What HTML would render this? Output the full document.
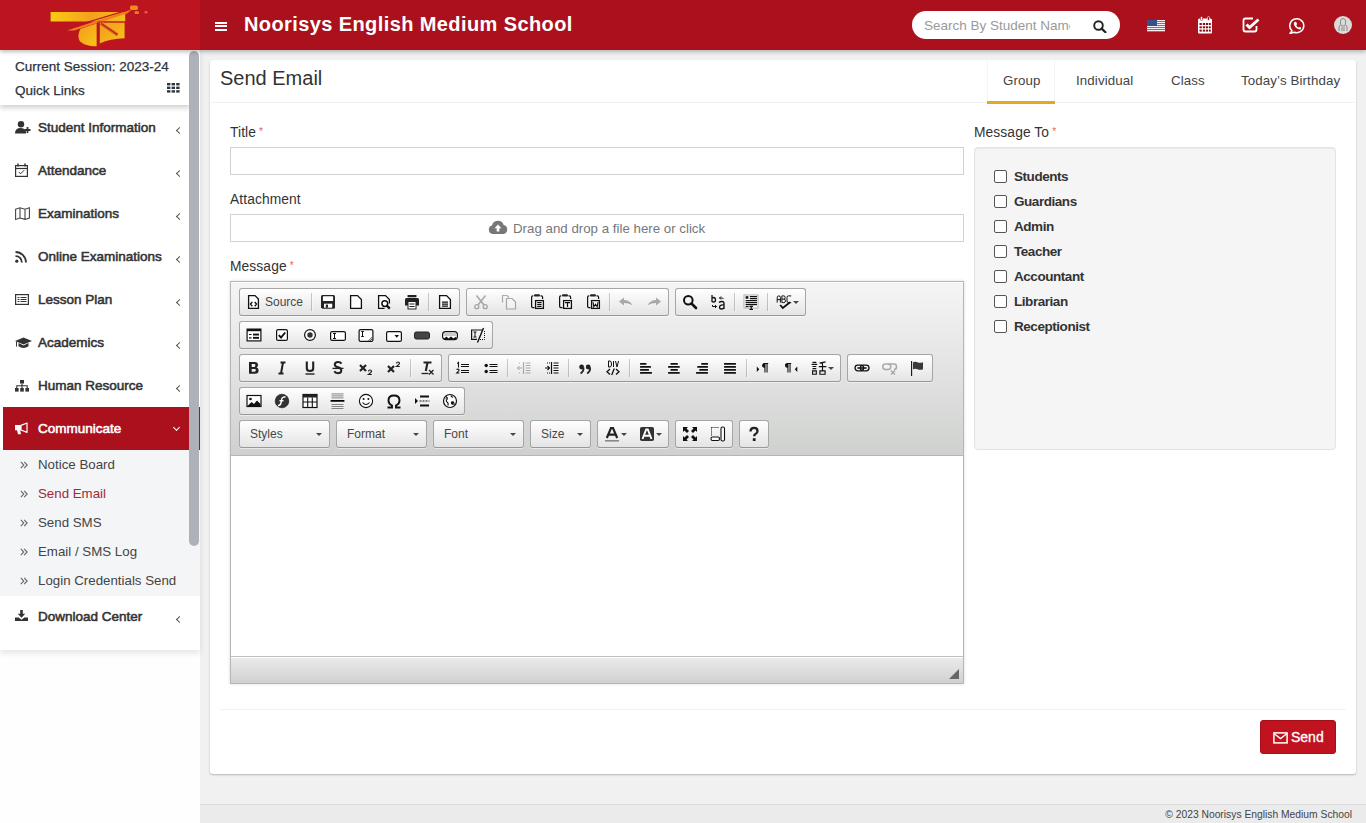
<!DOCTYPE html>
<html><head><meta charset="utf-8">
<style>
*{box-sizing:border-box;margin:0;padding:0}
html,body{width:1366px;height:823px;overflow:hidden}
body{font-family:"Liberation Sans",sans-serif;background:#f1f1f1;position:relative;color:#333}
.abs{position:absolute}
#hdr{left:0;top:0;width:1366px;height:50px;background:#aa111c;box-shadow:0 2px 4px rgba(0,0,0,.25);z-index:5}
#logo{left:0;top:0;width:200px;height:50px;background:#bd1520}
#title{left:244px;top:13px;color:#fff;font-weight:bold;font-size:20px;letter-spacing:0.4px;line-height:23px}
#search{left:912px;top:11px;width:208px;height:28px;background:#fff;border-radius:14px}
#search span{position:absolute;left:12px;top:7px;font-size:13.5px;color:#9a9a9a;white-space:nowrap;width:146px;overflow:hidden}
#side{left:0;top:50px;width:200px;height:600px;background:#fff;box-shadow:0 3px 6px rgba(0,0,0,.10)}
#sess{left:0;top:50px;width:190px;height:55px;background:#fff;box-shadow:0 3px 5px rgba(0,0,0,.18);z-index:2}
.sess1{position:absolute;left:15px;top:9px;font-size:13.5px;color:#2b3540;-webkit-text-stroke:0.25px #2b3540;white-space:nowrap}
.sess2{position:absolute;left:15px;top:33px;font-size:13.5px;color:#2b3540;-webkit-text-stroke:0.25px #2b3540;white-space:nowrap}
#sbar{left:189px;top:51px;width:10px;height:495px;background:#aeb1b8;border-radius:5px;z-index:3}
.mi{position:absolute;left:0;width:190px;height:43px;transform:translateY(1px)}
.mi .t{position:absolute;left:38px;top:13px;font-size:13.5px;font-weight:normal;color:#333;-webkit-text-stroke:0.55px #333;letter-spacing:0px;white-space:nowrap}
.mi .ch{position:absolute;left:177px;top:21px;width:5px;height:5px;border-left:1px solid #555;border-bottom:1px solid #555;transform:rotate(45deg)}
.mi .ic{position:absolute;left:15px;top:14px}
#comm{left:3px;top:407px;width:197px;height:43px;background:#ab111c}
.sub{position:absolute;left:0;width:200px;height:29px;background:#f4f5f7}
.sub .t{position:absolute;left:38px;top:7px;font-size:13.3px;color:#444;white-space:nowrap}
.sub .r{position:absolute;left:20px;top:11px;width:8px;height:8px}
#foot{left:200px;top:804px;width:1166px;height:19px;background:#ebebeb;border-top:1px solid #ddd}
#foot span{position:absolute;right:14px;top:4px;font-size:10.3px;color:#444;white-space:nowrap}
#card{left:210px;top:60px;width:1146px;height:714px;background:#fff;border-radius:3px;box-shadow:0 1px 2px rgba(0,0,0,.25)}

.lbl{position:absolute;font-size:13.8px;color:#333;letter-spacing:0.1px;white-space:nowrap}
.lbl b{color:#e0626a;font-weight:normal;font-size:10px;position:relative;top:-2px;margin-left:3px}
.inp{position:absolute;background:#fff;border:1px solid #d2d2d2}
.tab{position:absolute;top:73px;font-size:13.3px;color:#444;white-space:nowrap;letter-spacing:0.12px}
#well{left:974px;top:147px;width:362px;height:303px;background:#f5f5f5;border:1px solid #e3e3e3;border-radius:4px;box-shadow:inset 0 1px 1px rgba(0,0,0,.05)}
.cb{position:absolute;left:994px;width:13px;height:13px;border:1px solid #555;border-radius:2px;background:#fff}
.cbt{position:absolute;left:1014px;font-size:13.5px;font-weight:bold;color:#333;letter-spacing:-0.45px;white-space:nowrap}
#sendbtn{left:1260px;top:720px;width:76px;height:34px;background:#c1121f;border:1px solid #a50f1a;border-radius:3px}

.kg{position:absolute;display:flex;height:28px;border:1px solid #a6a6a6;border-bottom-color:#979797;border-radius:3px;background:linear-gradient(to bottom,#fff,#e4e4e4);box-shadow:0 1px 0 rgba(255,255,255,.5),0 0 2px rgba(255,255,255,.15) inset,0 1px 0 rgba(255,255,255,.15) inset}
.kb{position:relative;display:block;height:26px;flex:none}
.ki{position:absolute;left:6px;top:5px;width:16px;height:16px;display:block}
.ki svg{display:block}
.kl{position:absolute;left:25px;top:5px;font-size:12px;line-height:17px;color:#474747;font-family:"Liberation Sans",sans-serif}
.ks{display:block;flex:none;width:1px;height:18px;margin:4px 2px 0;background:rgba(0,0,0,.2);box-shadow:1px 0 1px rgba(255,255,255,.5)}
.ka{position:absolute;left:23px;top:12px;width:0;height:0;border-left:3px solid transparent;border-right:3px solid transparent;border-top:3px solid #474747}
.kct{position:absolute;left:10px;top:0;line-height:26px;font-size:12px;color:#474747}
</style></head><body>
<div id="hdr" class="abs">
  <div id="logo" class="abs"></div>
  <div class="abs" style="left:215px;top:21.5px;width:11.5px;height:2.4px;background:#fff"></div>
  <div class="abs" style="left:215px;top:25px;width:11.5px;height:2.4px;background:#fff"></div>
  <div class="abs" style="left:215px;top:28.6px;width:11.5px;height:2.4px;background:#fff"></div>
  <div id="title" class="abs">Noorisys English Medium School</div>
  <div id="search" class="abs"><span>Search By Student Name</span><svg class="abs" style="left:181px;top:9px" width="14" height="13" viewBox="0 0 14 13"><circle cx="5.5" cy="5.5" r="4.3" fill="none" stroke="#222" stroke-width="1.9"/><path d="M8.6 8.6L12.5 12.3" stroke="#222" stroke-width="2.2" stroke-linecap="round"/></svg></div>
  <svg class="abs" style="left:45px;top:0" width="105" height="50" viewBox="45 0 105 50">
   <defs><linearGradient id="lg1" x1="0" x2="1" y1="0" y2="0"><stop offset="0" stop-color="#f8cc12"/><stop offset=".55" stop-color="#f4a01e"/><stop offset="1" stop-color="#f3c21a"/></linearGradient>
   <linearGradient id="lg2" x1="0" x2="1" y1="0" y2="1"><stop offset="0" stop-color="#f29a1e"/><stop offset="1" stop-color="#f8c416"/></linearGradient></defs>
   <rect x="50.6" y="12" width="74.6" height="9.5" fill="url(#lg1)"/>
   <path d="M80.5 28.8L96.6 23.4V46.2Q86 46.5 80 41.5Q76.5 36 80.5 28.8Z" fill="url(#lg2)"/>
   <path d="M99.8 22.4H124.6V38.2Q110 38.5 99.8 43.5Z" fill="url(#lg2)"/>
   <path d="M67 30.6L126 11.2L132 9.6L127 13.6L74 30.4Z" fill="#f0801e"/>
   <path d="M77 25.3L127 10.4" stroke="#c0141e" stroke-width="1.1"/>
   <path d="M97 21.9H125" stroke="#c0141e" stroke-width=".8"/>
   <path d="M101 23.5L117.5 34.8" stroke="#c02a1c" stroke-width="3"/><path d="M100.5 24.3L116.5 35.3M101.8 22.6L118 33.7" stroke="#f2a41c" stroke-width=".5"/>
   <path d="M102.5 22.3L118.5 33" stroke="#f4b01a" stroke-width=".6"/>
   <rect x="130" y="5.5" width="8" height="4.5" rx="1.8" fill="#f08a22"/><rect x="134.5" y="11.2" width="4.5" height="2.8" rx="1.2" fill="#ee7c22"/><rect x="144.5" y="11" width="3" height="2.5" rx="1" fill="#e8603a"/>
  </svg>
  <svg class="abs" style="left:1147px;top:20px" width="18" height="12" viewBox="0 0 18 12"><rect width="18" height="12" fill="#f6eef0"/><g fill="#d8505e"><rect y="1" width="18" height="1"/><rect y="3" width="18" height="1"/><rect y="5" width="18" height="1"/><rect y="7" width="18" height="1"/><rect y="9" width="18" height="1"/><rect y="11" width="18" height="1"/></g><rect width="10" height="6" fill="#34508e"/></svg>
  <svg class="abs" style="left:1197px;top:16px" width="16" height="18" viewBox="0 0 16 18"><path d="M1 4Q1 2.5 2.5 2.5H13.5Q15 2.5 15 4V16.5Q15 17.5 14 17.5H2Q1 17.5 1 16.5Z" fill="#fff"/><rect x="3.5" y="0.5" width="2" height="4" rx="1" fill="#fff" stroke="#aa111c" stroke-width=".6"/><rect x="10.5" y="0.5" width="2" height="4" rx="1" fill="#aa111c" stroke="#fff" stroke-width=".6"/><g fill="#8a0c16"><rect x="2.5" y="7" width="2.3" height="2"/><rect x="5.8" y="7" width="2.3" height="2"/><rect x="8.9" y="7" width="2.3" height="2"/><rect x="12" y="7" width="1.8" height="2"/><rect x="2.5" y="10.3" width="2.3" height="2"/><rect x="5.8" y="10.3" width="2.3" height="2"/><rect x="8.9" y="10.3" width="2.3" height="2"/><rect x="12" y="10.3" width="1.8" height="2"/><rect x="2.5" y="13.6" width="2.3" height="2"/><rect x="5.8" y="13.6" width="2.3" height="2"/><rect x="8.9" y="13.6" width="2.3" height="2"/><rect x="12" y="13.6" width="1.8" height="2"/></g></svg>
  <svg class="abs" style="left:1241px;top:16px" width="20" height="18" viewBox="0 0 20 18"><path d="M12 2.5H4.5Q2.5 2.5 2.5 4.5V13.5Q2.5 15.5 4.5 15.5H13.5Q15.5 15.5 15.5 13.5V10" fill="none" stroke="#fff" stroke-width="1.8"/><path d="M5.5 8.5L8.5 11.5L17.5 3.5" fill="none" stroke="#fff" stroke-width="3"/></svg>
  <svg class="abs" style="left:1289px;top:17px" width="17" height="17" viewBox="0 0 17 17"><path d="M3 13.8A7 7 0 1 1 5.2 15.2L1 16.5Z" fill="none" stroke="#fff" stroke-width="1.5" stroke-linejoin="round"/><path d="M6 4.8Q7 4.5 7.5 5.5L8 7Q8 7.6 7.3 8.2Q8 9.8 9.6 10.6Q10.2 10 10.7 10L12 10.6Q12.5 11.2 11.8 12.2Q10.5 13 8.5 11.8Q5.5 10 4.8 7.3Q4.6 5.5 6 4.8Z" fill="#fff"/></svg>
  <svg class="abs" style="left:1334px;top:15.5px" width="18" height="18" viewBox="0 0 18 18"><circle cx="9" cy="9" r="9" fill="#d9dcd9"/><g fill="none" stroke="#777" stroke-width=".8"><path d="M6.5 5Q6.5 2.5 9 2.5Q11.5 2.5 11.5 5V8Q11.5 10 9 10Q6.5 10 6.5 8Z"/><path d="M5 15V11Q5 9.5 6.5 9.5M13 15V11Q13 9.5 11.5 9.5M7 12h4M7 14h4"/></g></svg>
</div>
<div class="abs" style="left:0;top:50px;width:200px;height:773px;background:#fefefe"></div><div id="side" class="abs"></div>
<div id="sess" class="abs"><div class="sess1">Current Session: 2023-24</div><div class="sess2">Quick Links</div><svg class="abs" style="left:167px;top:33px" width="13" height="10" viewBox="0 0 13 10"><g fill="#2b3540"><rect x="0" y="0" width="3.4" height="2.4"/><rect x="4.6" y="0" width="3.4" height="2.4"/><rect x="9.2" y="0" width="3.4" height="2.4"/><rect x="0" y="3.6" width="3.4" height="2.4"/><rect x="4.6" y="3.6" width="3.4" height="2.4"/><rect x="9.2" y="3.6" width="3.4" height="2.4"/><rect x="0" y="7.2" width="3.4" height="2.4"/><rect x="4.6" y="7.2" width="3.4" height="2.4"/><rect x="9.2" y="7.2" width="3.4" height="2.4"/></g></svg></div>

<div class="mi" style="top:106px"><svg class="ic" style="top:14px" width="17" height="13" viewBox="0 0 17 13"><circle cx="6" cy="3.3" r="3.2" fill="#333"/><path d="M0 12.5 Q0 7 5.5 7 Q10 7 11 10.5 L11 12.5Z" fill="#333"/><path d="M9.5 9h6M12.5 6v6" stroke="#333" stroke-width="1.8"/></svg><span class="t">Student Information</span><i class="ch"></i></div>
<div class="mi" style="top:149px"><svg class="ic" style="top:13px" width="13" height="14" viewBox="0 0 13 14"><rect x="0.6" y="2.6" width="11.8" height="10.8" fill="none" stroke="#333" stroke-width="1.2"/><path d="M0.6 5.5h11.8" stroke="#333" stroke-width="1.2"/><path d="M3 0.5v3M10 0.5v3" stroke="#333" stroke-width="1.5"/><path d="M3.8 9l1.8 1.8 3.6-3.6" fill="none" stroke="#333" stroke-width="1"/></svg><span class="t">Attendance</span><i class="ch"></i></div>
<div class="mi" style="top:192px"><svg class="ic" style="top:14px" width="15" height="13" viewBox="0 0 15 13"><path d="M0.6 2.2 L5 0.8 L10 2.2 L14.4 0.8 V11 L10 12.4 L5 11 L0.6 12.4Z M5 0.8V11 M10 2.2V12.4" fill="none" stroke="#444" stroke-width="1.1"/></svg><span class="t">Examinations</span><i class="ch"></i></div>
<div class="mi" style="top:235px"><svg class="ic" style="top:15px" width="12" height="12" viewBox="0 0 12 12"><circle cx="1.8" cy="10.2" r="1.6" fill="#333"/><path d="M0.5 5.2 A6 6 0 0 1 6.8 11.5 M0.5 1 A10.5 10.5 0 0 1 11 11.5" fill="none" stroke="#333" stroke-width="1.8"/></svg><span class="t">Online Examinations</span><i class="ch"></i></div>
<div class="mi" style="top:278px"><svg class="ic" style="top:15px" width="14" height="11" viewBox="0 0 14 11"><rect x="0.6" y="0.6" width="12.8" height="9.8" fill="none" stroke="#333" stroke-width="1.2"/><path d="M2.5 3.5h2M5.5 3.5h6M2.5 5.5h2M5.5 5.5h6M2.5 7.5h2M5.5 7.5h6" stroke="#333" stroke-width="1.1"/></svg><span class="t">Lesson Plan</span><i class="ch"></i></div>
<div class="mi" style="top:321px"><svg class="ic" style="top:15px" width="17" height="12" viewBox="0 0 17 12"><path d="M0 4 L8.5 0.5 L17 4 L8.5 7.5Z" fill="#333"/><path d="M3.5 6v3.3 Q8.5 12.5 13.5 9.3V6L8.5 8.5Z" fill="#333"/><path d="M1.5 4.5v5" stroke="#333" stroke-width="1"/></svg><span class="t">Academics</span><i class="ch"></i></div>
<div class="mi" style="top:364px"><svg class="ic" style="top:15px" width="14" height="12" viewBox="0 0 14 12"><rect x="5" y="0" width="4" height="3.5" fill="#333"/><rect x="0" y="8" width="3.6" height="3.6" fill="#333"/><rect x="5.2" y="8" width="3.6" height="3.6" fill="#333"/><rect x="10.4" y="8" width="3.6" height="3.6" fill="#333"/><path d="M7 3.5v4.5M1.8 8V5.8h10.4V8" fill="none" stroke="#333" stroke-width="1.1"/></svg><span class="t">Human Resource</span><i class="ch"></i></div>
<div id="comm" class="abs"><svg class="abs" style="left:12px;top:15px" width="15" height="13" viewBox="0 0 15 13"><rect x="0" y="3" width="6" height="5.3" fill="#fff"/><path d="M2 8h3.2l.8 4.2H3Z" fill="#fff"/><path d="M6 3.4L12 1V10.4L6 8Z" fill="none" stroke="#fff" stroke-width="1.2" stroke-linejoin="round"/></svg><span class="abs" style="left:35px;top:14px;font-size:13.5px;font-weight:normal;color:#fff;-webkit-text-stroke:0.55px #fff">Communicate</span><i class="abs" style="left:171px;top:18px;width:5px;height:5px;border-right:1.3px solid #fff;border-bottom:1.3px solid #fff;transform:rotate(45deg)"></i></div>
<div class="sub" style="top:450px"><svg class="r" viewBox="0 0 8 8"><path d="M0.8 0.8L3.8 4L0.8 7.2M4.2 0.8L7.2 4L4.2 7.2" fill="none" stroke="#666" stroke-width="1.1"/></svg><span class="t">Notice Board</span></div>
<div class="sub" style="top:479px"><svg class="r" viewBox="0 0 8 8"><path d="M0.8 0.8L3.8 4L0.8 7.2M4.2 0.8L7.2 4L4.2 7.2" fill="none" stroke="#666" stroke-width="1.1"/></svg><span class="t" style="color:#9e2a36">Send Email</span></div>
<div class="sub" style="top:508px"><svg class="r" viewBox="0 0 8 8"><path d="M0.8 0.8L3.8 4L0.8 7.2M4.2 0.8L7.2 4L4.2 7.2" fill="none" stroke="#666" stroke-width="1.1"/></svg><span class="t">Send SMS</span></div>
<div class="sub" style="top:537px"><svg class="r" viewBox="0 0 8 8"><path d="M0.8 0.8L3.8 4L0.8 7.2M4.2 0.8L7.2 4L4.2 7.2" fill="none" stroke="#666" stroke-width="1.1"/></svg><span class="t">Email / SMS Log</span></div>
<div class="sub" style="top:566px;height:30px"><svg class="r" viewBox="0 0 8 8"><path d="M0.8 0.8L3.8 4L0.8 7.2M4.2 0.8L7.2 4L4.2 7.2" fill="none" stroke="#666" stroke-width="1.1"/></svg><span class="t">Login Credentials Send</span></div>
<div class="mi" style="top:595px"><svg class="ic" style="top:14px" width="13" height="12" viewBox="0 0 13 12"><path d="M5.2 0h2.6v3.8h2.4L6.5 7.8 2.8 3.8h2.4Z" fill="#333"/><path d="M0 7.5h3.6l2.9 2.3 2.9-2.3H13V11H0Z" fill="#333"/></svg><span class="t">Download Center</span><i class="ch"></i></div>
<div id="sbar" class="abs"></div>
<div id="foot" class="abs"><span>© 2023 Noorisys English Medium School</span></div>
<div id="card" class="abs"></div>
<div class="abs" style="left:220px;top:67px;font-size:20px;color:#333">Send Email</div>
<div class="abs" style="left:211px;top:102px;width:1144px;height:1px;background:#f0f0f0"></div>
<div class="abs" style="left:987px;top:60px;width:68px;height:43px;border-left:1px solid #f4f4f4;border-right:1px solid #f4f4f4"></div>
<div class="abs" style="left:987px;top:101px;width:68px;height:3px;background:#e8a723"></div>
<span class="tab" style="left:1003px">Group</span>
<span class="tab" style="left:1076px">Individual</span>
<span class="tab" style="left:1171px">Class</span>
<span class="tab" style="left:1241px">Today’s Birthday</span>
<div class="lbl" style="left:230px;top:125px">Title<b>*</b></div>
<div class="inp" style="left:230px;top:147px;width:734px;height:28px"></div>
<div class="lbl" style="left:230px;top:192px">Attachment</div>
<div class="inp" style="left:230px;top:214px;width:734px;height:28px"></div>
<svg class="abs" style="left:488px;top:220px" width="20" height="15" viewBox="0 0 20 15"><path d="M4.5 14 A4.3 4.3 0 0 1 4 5.6 A6 6 0 0 1 15.6 5 A4.6 4.6 0 0 1 15.5 14Z" fill="#777"/><path d="M10 4.5 L6.5 8.2 H8.7 V11.5 H11.3 V8.2 H13.5Z" fill="#fff"/></svg>
<span class="abs" style="left:513px;top:221px;font-size:13.3px;color:#777;white-space:nowrap">Drag and drop a file here or click</span>
<div class="lbl" style="left:230px;top:259px">Message<b>*</b></div>
<div class="lbl" style="left:974px;top:125px">Message To<b>*</b></div>
<div id="well" class="abs"></div>
<i class="cb" style="top:170px"></i><span class="cbt" style="top:169px">Students</span>
<i class="cb" style="top:195px"></i><span class="cbt" style="top:194px">Guardians</span>
<i class="cb" style="top:220px"></i><span class="cbt" style="top:219px">Admin</span>
<i class="cb" style="top:245px"></i><span class="cbt" style="top:244px">Teacher</span>
<i class="cb" style="top:270px"></i><span class="cbt" style="top:269px">Accountant</span>
<i class="cb" style="top:295px"></i><span class="cbt" style="top:294px">Librarian</span>
<i class="cb" style="top:320px"></i><span class="cbt" style="top:319px">Receptionist</span>
<div class="abs" style="left:220px;top:709px;width:1126px;height:1px;background:#f2f2f2"></div>
<div id="sendbtn" class="abs"><svg class="abs" style="left:12px;top:11px" width="15" height="12" viewBox="0 0 15 12"><rect x="0.9" y="0.9" width="13.2" height="10" fill="none" stroke="#fff" stroke-width="1.5"/><path d="M1.2 1.8 L7.5 6.6 L13.8 1.8" fill="none" stroke="#fff" stroke-width="1.3"/></svg><span class="abs" style="left:30px;top:8px;font-size:14px;color:#fff;-webkit-text-stroke:0.3px #fff">Send</span></div>
<div id="editor" class="abs" style="left:230px;top:281px;width:734px;height:403px;border:1px solid #b6b6b6;background:#fff;box-shadow:0 0 3px rgba(0,0,0,.15)">
 <div id="ktop" class="abs" style="left:0;top:0;width:732px;height:174px;border-bottom:1px solid #b6b6b6;background:linear-gradient(to bottom,#f5f5f5,#cfd1cf);box-shadow:0 1px 0 #fff inset"><!--TB--><div class="kg" style="left:8px;top:6px;"><span class="kb" style="width:69px"><i class="ki"><svg width="16" height="16" viewBox="0 0 16 16" ><path d="M2.6 1.6H9L12.4 5V14.4H2.6Z" fill="#fff" stroke="#111" stroke-width="1.3"/><path d="M6.3 8L4.5 10.1L6.3 12.2M8.7 8L10.5 10.1L8.7 12.2" fill="none" stroke="#111" stroke-width="1.4"/></svg></i><span class="kl">Source</span></span><span class="ks"></span><span class="kb" style="width:28px"><i class="ki"><svg width="16" height="16" viewBox="0 0 16 16" ><path d="M1 2.5Q1 1 2.5 1H13.5Q15 1 15 2.5V13.5Q15 14.8 13.5 14.8H2.5L1 13.3Z" fill="#222"/><rect x="2.9" y="2.2" width="10.2" height="4.8" rx=".6" fill="#fff"/><rect x="4" y="9.7" width="8.2" height="4" fill="#fff"/><rect x="5.8" y="10.6" width="2.2" height="3.1" fill="#222"/></svg></i></span><span class="kb" style="width:28px"><i class="ki"><svg width="16" height="16" viewBox="0 0 16 16" ><path d="M2.6 1.6H9.5L13.4 5.5V14.4H2.6Z" fill="#fff" stroke="#111" stroke-width="1.3" stroke-linejoin="miter"/></svg></i></span><span class="kb" style="width:28px"><i class="ki"><svg width="16" height="16" viewBox="0 0 16 16" ><path d="M8.5 14.4H2.6V1.6H9.5L13.4 5.5V9.5" fill="#fff" stroke="#111" stroke-width="1.3"/><circle cx="8.8" cy="9.6" r="2.9" fill="#fff" stroke="#111" stroke-width="1.5"/><path d="M10.8 11.6L13.8 14.6" stroke="#111" stroke-width="2.2"/></svg></i></span><span class="kb" style="width:28px"><i class="ki"><svg width="16" height="16" viewBox="0 0 16 16" ><rect x="3.5" y="1" width="9" height="2.2" rx=".6" fill="#222"/><path d="M1 5.5Q1 4 2.5 4H13.5Q15 4 15 5.5V11.5H1Z" fill="#222"/><rect x="4" y="7.5" width="8" height="7.5" fill="#fff" stroke="#222" stroke-width="1"/><path d="M5.5 10h5M5.5 12.5h5" stroke="#222" stroke-width="1.2"/></svg></i></span><span class="ks"></span><span class="kb" style="width:28px"><i class="ki"><svg width="16" height="16" viewBox="0 0 16 16" ><path d="M2.6 1.6H9.5L13.4 5.5V14.4H2.6Z" fill="#fff" stroke="#111" stroke-width="1.3"/><path d="M5 8.2h6M5 10.2h6M5 12.2h6" stroke="#111" stroke-width="1.2"/></svg></i></span></div><div class="kg" style="left:235px;top:6px;"><span class="kb" style="width:28px"><i class="ki"><svg width="16" height="16" viewBox="0 0 16 16" ><g opacity=".3"><path d="M3.5 1.5L11 11M12.5 1.5L5 11" stroke="#000" stroke-width="1.6"/><circle cx="3.8" cy="12.7" r="2" fill="none" stroke="#000" stroke-width="1.3"/><circle cx="12.2" cy="12.7" r="2" fill="none" stroke="#000" stroke-width="1.3"/></g></svg></i></span><span class="kb" style="width:28px"><i class="ki"><svg width="16" height="16" viewBox="0 0 16 16" ><g opacity=".3"><path d="M1.5 8.5V1.5H6L8 3.5" fill="none" stroke="#000" stroke-width="1.2"/><path d="M5.5 4.5H11L14.5 8V15H5.5Z" fill="#fff" stroke="#000" stroke-width="1.2"/></g></svg></i></span><span class="kb" style="width:28px"><i class="ki"><svg width="16" height="16" viewBox="0 0 16 16" ><path d="M4.3 1.8H3.8Q2.6 1.8 2.6 3.2V12.2Q2.6 13.6 4 13.6H5.5" fill="none" stroke="#111" stroke-width="1.2"/><path d="M11.5 1.8H12.3Q13.6 1.8 13.6 3.2V5" fill="none" stroke="#111" stroke-width="1.2"/><rect x="5" y="0.3" width="6" height="2.3" rx="1" fill="#222"/><rect x="6.6" y="6.6" width="7.8" height="7.8" fill="#fff" stroke="#111" stroke-width="1.3"/><path d="M8.2 8.6h4.4M8.2 10.5h4.4M8.2 12.4h4.4" stroke="#111" stroke-width="1.1"/></svg></i></span><span class="kb" style="width:28px"><i class="ki"><svg width="16" height="16" viewBox="0 0 16 16" ><path d="M4.3 1.8H3.8Q2.6 1.8 2.6 3.2V12.2Q2.6 13.6 4 13.6H5.5" fill="none" stroke="#111" stroke-width="1.2"/><path d="M11.5 1.8H12.3Q13.6 1.8 13.6 3.2V5" fill="none" stroke="#111" stroke-width="1.2"/><rect x="5" y="0.3" width="6" height="2.3" rx="1" fill="#222"/><rect x="6.6" y="6.6" width="7.8" height="7.8" fill="#fff" stroke="#111" stroke-width="1.3"/><path d="M8 8.6h5M10.5 8.6V13" stroke="#111" stroke-width="1.3"/></svg></i></span><span class="kb" style="width:28px"><i class="ki"><svg width="16" height="16" viewBox="0 0 16 16" ><path d="M4.3 1.8H3.8Q2.6 1.8 2.6 3.2V12.2Q2.6 13.6 4 13.6H5.5" fill="none" stroke="#111" stroke-width="1.2"/><path d="M11.5 1.8H12.3Q13.6 1.8 13.6 3.2V5" fill="none" stroke="#111" stroke-width="1.2"/><rect x="5" y="0.3" width="6" height="2.3" rx="1" fill="#222"/><rect x="6.6" y="6.6" width="7.8" height="7.8" fill="#fff" stroke="#111" stroke-width="1.3"/><path d="M8 8.2L8.8 12.8L10.5 10.2L12.2 12.8L13 8.2" fill="none" stroke="#111" stroke-width="1.1"/></svg></i></span><span class="ks"></span><span class="kb" style="width:28px"><i class="ki"><svg width="16" height="16" viewBox="0 0 16 16" ><g opacity=".3"><path d="M1 7.5L6 3.5V6Q12 6 14.5 11.5Q11.5 9 6 9V11.5Z" fill="#000"/></g></svg></i></span><span class="kb" style="width:28px"><i class="ki"><svg width="16" height="16" viewBox="0 0 16 16" ><g opacity=".3" transform="translate(16 0) scale(-1 1)"><path d="M1 7.5L6 3.5V6Q12 6 14.5 11.5Q11.5 9 6 9V11.5Z" fill="#000"/></g></svg></i></span></div><div class="kg" style="left:444px;top:6px;"><span class="kb" style="width:28px"><i class="ki"><svg width="16" height="16" viewBox="0 0 16 16" ><circle cx="6.3" cy="6.3" r="4.3" fill="none" stroke="#111" stroke-width="2"/><path d="M9.5 9.5L14 14" stroke="#111" stroke-width="2.6" stroke-linecap="round"/></svg></i></span><span class="kb" style="width:28px"><i class="ki"><svg width="16" height="16" viewBox="0 0 16 16" ><path d="M2 1V8M2 4.5Q2 3.5 3.5 3.5Q5.5 3.5 5.5 6Q5.5 8 3.5 8Q2 8 2 7" fill="none" stroke="#111" stroke-width="1.3"/><path d="M9 8.5Q10 7.5 12 7.5Q14 7.5 14 9.5V15M14 11Q9.5 10.5 9.5 13.2Q9.5 15 11.5 15Q13.5 15 14 13.5" fill="none" stroke="#111" stroke-width="1.3"/><path d="M11 2.5L9.5 4L11 5.5M9.5 4H12.5L13.5 5" fill="none" stroke="#111" stroke-width="1"/><path d="M5 11L6.5 12.5L5 14M2.5 11V12.5H6.5" fill="none" stroke="#111" stroke-width="1"/></svg></i></span><span class="ks"></span><span class="kb" style="width:28px"><i class="ki"><svg width="16" height="16" viewBox="0 0 16 16" ><rect x="0.5" y="0.5" width="15" height="14" fill="#b0b0b0"/><rect x="1.5" y="1.5" width="13" height="12" fill="#fff"/><rect x="2.6" y="2.2" width="2.8" height="2.6" fill="#111"/><path d="M6.8 2.6h7.2M6.8 4.6h7.2M2.6 6.6h11.4M2.6 8.6h11.4M2.6 10.6h11.4" stroke="#111" stroke-width="1.1"/><path d="M2.6 12.6h3" stroke="#111" stroke-width="1.1"/><path d="M6.5 12.4h3.5M8.2 12.4V15.6M6.5 15.3h3.5" stroke="#111" stroke-width="1.2"/></svg></i></span><span class="ks"></span><span class="kb" style="width:35px"><i class="ki"><svg width="16" height="16" viewBox="0 0 16 16" ><g fill="none" stroke="#111" stroke-width="1"><path d="M1.2 8.6V3.4Q1.2 1.9 2.8 1.9Q4.4 1.9 4.4 3.4V8.6M1.2 5.6h3.2"/><path d="M5.9 8.6V1.9H7.8Q9.2 1.9 9.2 3.5Q9.2 5.1 7.8 5.1H5.9M7.8 5.1Q9.5 5.1 9.5 6.8Q9.5 8.6 7.8 8.6H5.9"/><path d="M15.2 1.9H12.4Q11 1.9 11 3.5V7Q11 8.6 12.4 8.6H15.2"/></g><path d="M4.2 11L6.8 14L14 8.2" fill="none" stroke="#111" stroke-width="1.9"/></svg></i><i class="ka"></i></span></div><div class="kg" style="left:8px;top:39px;"><span class="kb" style="width:28px"><i class="ki"><svg width="16" height="16" viewBox="0 0 16 16" ><rect x="1.1" y="2.1" width="13.8" height="11.8" fill="#fff" stroke="#111" stroke-width="1.2"/><rect x="1" y="2" width="14" height="2.2" fill="#111"/><path d="M3 7.5h2.5M3 10.8h2.5" stroke="#111" stroke-width="1.2"/><rect x="7" y="6.6" width="6" height="1.9" fill="#111"/><rect x="7" y="9.9" width="6" height="1.9" fill="#111"/></svg></i></span><span class="kb" style="width:28px"><i class="ki"><svg width="16" height="16" viewBox="0 0 16 16" ><rect x="2.6" y="2.6" width="10.8" height="10.8" rx="1.5" fill="#fff" stroke="#111" stroke-width="1.2"/><path d="M4.8 8.2L7 10.5L11.2 5.5" fill="none" stroke="#111" stroke-width="1.9"/></svg></i></span><span class="kb" style="width:28px"><i class="ki"><svg width="16" height="16" viewBox="0 0 16 16" ><circle cx="8" cy="8" r="5.4" fill="#fff" stroke="#111" stroke-width="1.2"/><circle cx="8" cy="8" r="2.7" fill="#333"/></svg></i></span><span class="kb" style="width:28px"><i class="ki"><svg width="16" height="16" viewBox="0 0 16 16" ><rect x="0.6" y="4.6" width="14.8" height="8.8" rx="1.5" fill="#fff" stroke="#111" stroke-width="1.2"/><path d="M3 6.5h3M4.5 6.5V11.5M3 11.5h3" stroke="#111" stroke-width="1"/></svg></i></span><span class="kb" style="width:28px"><i class="ki"><svg width="16" height="16" viewBox="0 0 16 16" ><rect x="1.1" y="2.6" width="13.8" height="11.8" rx="1.5" fill="#fff" stroke="#111" stroke-width="1.2"/><path d="M3.2 4.5h2.6M4.5 4.5V9.5M3.2 9.5h2.6" stroke="#111" stroke-width="1"/><path d="M10.5 13.8L14.3 10M12.3 13.8L14.3 11.8" stroke="#333" stroke-width=".9"/></svg></i></span><span class="kb" style="width:28px"><i class="ki"><svg width="16" height="16" viewBox="0 0 16 16" ><rect x="0.6" y="4.6" width="14.8" height="9.8" rx="1.5" fill="#fff" stroke="#111" stroke-width="1.2"/><path d="M8.5 8H13L10.75 10.7Z" fill="#111"/></svg></i></span><span class="kb" style="width:28px"><i class="ki"><svg width="16" height="16" viewBox="0 0 16 16" ><rect x="0.5" y="5" width="15" height="7" rx="1.8" fill="#444" stroke="#222" stroke-width="1"/></svg></i></span><span class="kb" style="width:28px"><i class="ki"><svg width="16" height="16" viewBox="0 0 16 16" ><rect x="0.6" y="4.6" width="14.8" height="8" rx="3" fill="#fff" stroke="#111" stroke-width="1.2"/><path d="M1.5 12L4.5 9.5L6.5 11.5L9 9.5L11.5 11.5L13.5 9.8L14.5 12Z" fill="#111"/><rect x="2" y="6" width="12" height="3" fill="#ccc"/></svg></i></span><span class="kb" style="width:28px"><i class="ki"><svg width="16" height="16" viewBox="0 0 16 16" ><path d="M13 3H1.6V12.4H7" fill="none" stroke="#111" stroke-width="1.2"/><path d="M3.5 5h3M5 5V10M3.5 10h3" stroke="#111" stroke-width="1"/><path d="M13.5 1L7.5 15.5" stroke="#111" stroke-width="1.4"/><path d="M14.5 4V12.5H10" fill="none" stroke="#111" stroke-width="1" stroke-dasharray="1 1"/></svg></i></span></div><div class="kg" style="left:8px;top:72px;"><span class="kb" style="width:28px"><i class="ki"><svg width="16" height="16" viewBox="0 0 16 16" ><path fill-rule="evenodd" d="M3 2H8.6Q12 2 12 5Q12 6.9 10.6 7.6Q12.6 8.3 12.6 10.6Q12.6 13.8 9 13.8H3ZM5.7 4.1V6.9H8.2Q9.4 6.9 9.4 5.5Q9.4 4.1 8.2 4.1ZM5.7 8.9V11.7H8.5Q9.9 11.7 9.9 10.3Q9.9 8.9 8.5 8.9Z" fill="#222"/></svg></i></span><span class="kb" style="width:28px"><i class="ki"><svg width="16" height="16" viewBox="0 0 16 16" ><path d="M6.5 2.5H11.5M4.5 13.5H9.5M9 2.5L7 13.5" stroke="#222" stroke-width="2"/></svg></i></span><span class="kb" style="width:28px"><i class="ki"><svg width="16" height="16" viewBox="0 0 16 16" ><path d="M4.8 1.5V8.2Q4.8 11 8 11Q11.2 11 11.2 8.2V1.5" fill="none" stroke="#222" stroke-width="2.1"/><path d="M3.5 14h9" stroke="#222" stroke-width="1.4"/></svg></i></span><span class="kb" style="width:28px"><i class="ki"><svg width="16" height="16" viewBox="0 0 16 16" ><path d="M11.5 3.6Q10.5 2 8 2Q4.8 2 4.8 4.6Q4.8 6.7 8 7.2Q11.3 7.8 11.3 10.4Q11.3 13.2 8 13.2Q5.2 13.2 4.3 11.3" fill="none" stroke="#222" stroke-width="2"/><path d="M2.5 8.4h11" stroke="#222" stroke-width="1.3"/></svg></i></span><span class="kb" style="width:28px"><i class="ki"><svg width="16" height="16" viewBox="0 0 16 16" ><path d="M2 5L8 11M8 5L2 11" stroke="#222" stroke-width="2.2"/><path d="M10.5 11.5Q10.5 10 12 10Q13.5 10 13.5 11.3Q13.5 12.3 10.5 14.5H13.8" fill="none" stroke="#222" stroke-width="1.2"/></svg></i></span><span class="kb" style="width:28px"><i class="ki"><svg width="16" height="16" viewBox="0 0 16 16" ><path d="M2 6L8 12M8 6L2 12" stroke="#222" stroke-width="2.2"/><path d="M10.5 3.5Q10.5 2 12 2Q13.5 2 13.5 3.3Q13.5 4.3 10.5 6.5H13.8" fill="none" stroke="#222" stroke-width="1.2"/></svg></i></span><span class="ks"></span><span class="kb" style="width:28px"><i class="ki"><svg width="16" height="16" viewBox="0 0 16 16" ><path d="M4.5 2.5H12.5M8.5 2.5L6.8 11" stroke="#222" stroke-width="2.1"/><path d="M2.5 13.5h7" stroke="#222" stroke-width="1.3"/><path d="M10 10L14.5 14.5M14.5 10L10 14.5" stroke="#222" stroke-width="1.3"/></svg></i></span></div><div class="kg" style="left:217px;top:72px;"><span class="kb" style="width:28px"><i class="ki"><svg width="16" height="16" viewBox="0 0 16 16" ><path d="M2.3 3.5L3.5 2.5V7.5" fill="none" stroke="#111" stroke-width="1.1"/><path d="M1.8 10Q2 9 3 9Q4.1 9 4.1 10Q4.1 10.8 1.8 13H4.3" fill="none" stroke="#111" stroke-width="1.1"/><path d="M6 4.5h8M6 6.5h8M6 10.5h8M6 12.5h8" stroke="#111" stroke-width="1.1"/></svg></i></span><span class="kb" style="width:28px"><i class="ki"><svg width="16" height="16" viewBox="0 0 16 16" ><circle cx="3.2" cy="5.5" r="1.7" fill="#111"/><circle cx="3.2" cy="11.5" r="1.7" fill="#111"/><path d="M6.5 4.5h8M6.5 6.5h8M6.5 10.5h8M6.5 12.5h8" stroke="#111" stroke-width="1.1"/></svg></i></span><span class="ks"></span><span class="kb" style="width:28px"><i class="ki"><svg width="16" height="16" viewBox="0 0 16 16" ><g opacity=".3"><path d="M7.5 2V14" stroke="#000" stroke-width="1.2"/><path d="M9.5 3h5M9.5 5.5h5M9.5 8h5M9.5 10.5h5M9.5 13h5" stroke="#000" stroke-width="1.1"/><path d="M6 8H1.5M3.5 6L1.5 8L3.5 10" fill="none" stroke="#000" stroke-width="1"/><path d="M3 3h1M3 13h1" stroke="#000" stroke-width="1" /></g></svg></i></span><span class="kb" style="width:28px"><i class="ki"><svg width="16" height="16" viewBox="0 0 16 16" ><path d="M7.5 2V14" stroke="#111" stroke-width="1.2"/><path d="M9.5 3h5M9.5 5.5h5M9.5 8h5M9.5 10.5h5M9.5 13h5" stroke="#111" stroke-width="1.1"/><path d="M1 8H5.5M3.5 6L5.5 8L3.5 10" fill="none" stroke="#111" stroke-width="1.1"/><path d="M3 3h1M3 13h1M5 3h1M5 13h1" stroke="#111" stroke-width="1"/></svg></i></span><span class="ks"></span><span class="kb" style="width:28px"><i class="ki"><svg width="16" height="16" viewBox="0 0 16 16" ><circle cx="4.6" cy="7" r="2.4" fill="#222"/><path d="M6.6 7.5Q6.8 11.5 3.5 13.5" fill="none" stroke="#222" stroke-width="1.7"/><circle cx="11.2" cy="7" r="2.4" fill="#222"/><path d="M13.2 7.5Q13.4 11.5 10.1 13.5" fill="none" stroke="#222" stroke-width="1.7"/></svg></i></span><span class="kb" style="width:28px"><i class="ki"><svg width="16" height="16" viewBox="0 0 16 16" ><path d="M3.5 1V7H5Q6.5 7 6.5 4Q6.5 1 5 1Z" fill="none" stroke="#111" stroke-width="1"/><path d="M8.5 1V7" stroke="#111" stroke-width="1"/><path d="M10.5 1L12 7L13.5 1" fill="none" stroke="#111" stroke-width="1"/><path d="M5 9L2 11.7L5 14.4M11 9L14 11.7L11 14.4M9.3 8.5L6.7 15" fill="none" stroke="#111" stroke-width="1.3"/></svg></i></span><span class="ks"></span><span class="kb" style="width:28px"><i class="ki"><svg width="16" height="16" viewBox="0 0 16 16" ><rect x="2.0" y="3.1" width="6.5" height="1.7" rx=".6" fill="#111"/><rect x="2.0" y="6.1" width="11.0" height="1.7" rx=".6" fill="#111"/><rect x="2.0" y="9.1" width="9.0" height="1.7" rx=".6" fill="#111"/><rect x="2.0" y="12.1" width="12.0" height="1.7" rx=".6" fill="#111"/></svg></i></span><span class="kb" style="width:28px"><i class="ki"><svg width="16" height="16" viewBox="0 0 16 16" ><rect x="4.4" y="3.1" width="7.5" height="1.7" rx=".6" fill="#111"/><rect x="2.0" y="6.1" width="11.8" height="1.7" rx=".6" fill="#111"/><rect x="4.4" y="9.1" width="7.5" height="1.7" rx=".6" fill="#111"/><rect x="2.0" y="12.1" width="11.8" height="1.7" rx=".6" fill="#111"/></svg></i></span><span class="kb" style="width:28px"><i class="ki"><svg width="16" height="16" viewBox="0 0 16 16" ><rect x="7.2" y="3.1" width="6.8" height="1.7" rx=".6" fill="#111"/><rect x="3.2" y="6.1" width="10.8" height="1.7" rx=".6" fill="#111"/><rect x="5.2" y="9.1" width="8.8" height="1.7" rx=".6" fill="#111"/><rect x="2.0" y="12.1" width="12.0" height="1.7" rx=".6" fill="#111"/></svg></i></span><span class="kb" style="width:28px"><i class="ki"><svg width="16" height="16" viewBox="0 0 16 16" ><rect x="2.0" y="3.1" width="12.0" height="1.7" rx=".6" fill="#111"/><rect x="2.0" y="6.1" width="12.0" height="1.7" rx=".6" fill="#111"/><rect x="2.0" y="9.1" width="12.0" height="1.7" rx=".6" fill="#111"/><rect x="2.0" y="12.1" width="12.0" height="1.7" rx=".6" fill="#111"/></svg></i></span><span class="ks"></span><span class="kb" style="width:28px"><i class="ki"><svg width="16" height="16" viewBox="0 0 16 16" ><path d="M1.8 6.6V12L4.3 9.3Z" fill="#111"/><path d="M9.6 3.1H13.2V4.1H12.6V12.6H11.5V4.1H10.5V12.6H9.4V7.7Q7 7.7 7 5.4Q7 3.1 9.6 3.1Z" fill="#111"/></svg></i></span><span class="kb" style="width:28px"><i class="ki"><svg width="16" height="16" viewBox="0 0 16 16" ><path d="M14.3 6.6V12L11.8 9.3Z" fill="#111"/><path d="M4.6 3.1H8.2V4.1H7.6V12.6H6.5V4.1H5.5V12.6H4.4V7.7Q2 7.7 2 5.4Q2 3.1 4.6 3.1Z" fill="#111"/></svg></i></span><span class="kb" style="width:35px"><i class="ki"><svg width="16" height="16" viewBox="0 0 16 16" ><g fill="none" stroke="#111" stroke-width="1.15"><path d="M1.5 2.3h3.8M0.6 4.4h5.6M1.5 6.5h3.8M1.5 8.6h3.8M1.6 10.8h3.7v3.4H1.6Z"/><path d="M8.6 3.1L14.6 1.9M7.8 6.6h7.6M11.5 2.8V10.3M8.9 10.8h5.2v3.4H8.9Z"/></g></svg></i><i class="ka"></i></span></div><div class="kg" style="left:616px;top:72px;"><span class="kb" style="width:28px"><i class="ki"><svg width="16" height="16" viewBox="0 0 16 16" ><g fill="none" stroke="#111" stroke-width="1.3"><rect x="1" y="5.2" width="8.6" height="5.6" rx="2.8"/><rect x="6.4" y="5.2" width="8.6" height="5.6" rx="2.8"/></g><rect x="3.2" y="7.3" width="9.6" height="1.5" rx=".7" fill="#111"/></svg></i></span><span class="kb" style="width:28px"><i class="ki"><svg width="16" height="16" viewBox="0 0 16 16" ><g opacity=".3" fill="none" stroke="#000"><rect x="0.8" y="4" width="8" height="5.5" rx="2.7" stroke-width="1.5"/><path d="M6.5 4H12Q14.5 4 14.5 6.7Q14.5 9.5 12 9.5" stroke-width="1.5"/><path d="M9 10.5L13 14.5M13 10.5L9 14.5" stroke-width="1.3"/></g></svg></i></span><span class="kb" style="width:28px"><i class="ki"><svg width="16" height="16" viewBox="0 0 16 16" ><path d="M1.6 1V16" stroke="#111" stroke-width="1.1"/><path d="M3 2.2Q5 1.2 7.5 2.2Q10 3.2 13 2.2V9.3Q10 10.3 7.5 9.3Q5 8.3 3 9.3Z" fill="#3a3a3a"/></svg></i></span></div><div class="kg" style="left:8px;top:105px;"><span class="kb" style="width:28px"><i class="ki"><svg width="16" height="16" viewBox="0 0 16 16" ><rect x="1" y="2.5" width="14" height="11" fill="#fff" stroke="#111" stroke-width="1.2"/><circle cx="4.5" cy="6" r="1.3" fill="#111"/><path d="M1.5 13L5.5 9L8 11L11 7.5L14.5 11V13Z" fill="#111"/></svg></i></span><span class="kb" style="width:28px"><i class="ki"><svg width="16" height="16" viewBox="0 0 16 16" ><circle cx="8" cy="8" r="6.8" fill="#333" stroke="#111" stroke-width=".6"/><path d="M11.5 4Q8 3.5 7.5 7L7 10Q6.5 12.5 4 12.5M5.5 7.8h4" fill="none" stroke="#fff" stroke-width="1.4"/></svg></i></span><span class="kb" style="width:28px"><i class="ki"><svg width="16" height="16" viewBox="0 0 16 16" ><rect x="1" y="1.5" width="14" height="13" fill="#fff" stroke="#111" stroke-width="1.2"/><rect x="1" y="1.5" width="14" height="3" fill="#222"/><path d="M1 9h14M5.7 4.5V14.5M10.3 4.5V14.5" stroke="#111" stroke-width="1.1"/></svg></i></span><span class="kb" style="width:28px"><i class="ki"><svg width="16" height="16" viewBox="0 0 16 16" ><path d="M1.5 0.9h12M1.5 2.9h12M1.5 4.9h12M1.5 11.5h12M1.5 13.5h12M1.5 15.5h12" stroke="#777" stroke-width=".9"/><rect x="0.5" y="7" width="14" height="1.8" rx=".5" fill="#000"/></svg></i></span><span class="kb" style="width:28px"><i class="ki"><svg width="16" height="16" viewBox="0 0 16 16" ><circle cx="8" cy="8" r="6.6" fill="#fff" stroke="#111" stroke-width="1.1"/><circle cx="5.6" cy="6" r="1" fill="#111"/><circle cx="10.4" cy="6" r="1" fill="#111"/><path d="M4.5 9.5Q8 13.5 11.5 9.5" fill="none" stroke="#111" stroke-width="1.1"/></svg></i></span><span class="kb" style="width:28px"><i class="ki"><svg width="16" height="16" viewBox="0 0 16 16" ><path d="M1.5 14.5H6V12.5Q2.5 11 2.5 7.5Q2.5 2.5 8 2.5Q13.5 2.5 13.5 7.5Q13.5 11 10 12.5V14.5H14.5" fill="none" stroke="#111" stroke-width="1.9"/></svg></i></span><span class="kb" style="width:28px"><i class="ki"><svg width="16" height="16" viewBox="0 0 16 16" ><path d="M1 5V11L4 8Z" fill="#111"/><rect x="6" y="2.5" width="9" height="2" fill="#111"/><rect x="6" y="11.5" width="9" height="2" fill="#111"/><path d="M5.5 8h10" stroke="#111" stroke-width="1" stroke-dasharray="2 1"/></svg></i></span><span class="kb" style="width:28px"><i class="ki"><svg width="16" height="16" viewBox="0 0 16 16" ><circle cx="8" cy="8" r="6.5" fill="#fff" stroke="#111" stroke-width="1.2"/><path d="M4 3.5Q6 5 5 6.5Q3.5 7.5 5 9Q6.5 9.5 6 12.5M9 2.5Q9.5 4.5 11 4M10 9Q12.5 9 12 12" fill="none" stroke="#111" stroke-width="1.1"/><path d="M2.5 6Q4 6.5 5.5 5Z M9 8.5L12 8.5L11 12L9 11Z" fill="#111"/></svg></i></span></div><div class="kg kc" style="left:8px;top:138px;width:91px"><span class="kct">Styles</span><i class="ka" style="left:auto;right:7px;top:12px"></i></div><div class="kg kc" style="left:105px;top:138px;width:91px"><span class="kct">Format</span><i class="ka" style="left:auto;right:7px;top:12px"></i></div><div class="kg kc" style="left:202px;top:138px;width:91px"><span class="kct">Font</span><i class="ka" style="left:auto;right:7px;top:12px"></i></div><div class="kg kc" style="left:299px;top:138px;width:61px"><span class="kct">Size</span><i class="ka" style="left:auto;right:7px;top:12px"></i></div><div class="kg" style="left:366px;top:138px;"><span class="kb" style="width:35px"><i class="ki"><svg width="16" height="16" viewBox="0 0 16 16" ><path d="M2.8 12L7 2H9L13.2 12M4.8 8.6H11.2" fill="none" stroke="#222" stroke-width="2.2"/><rect x="1" y="14" width="14" height="1.6" fill="#888"/></svg></i><i class="ka"></i></span><span class="kb" style="width:35px"><i class="ki"><svg width="16" height="16" viewBox="0 0 16 16" ><rect x="1" y="1" width="14" height="14" rx="1.8" fill="#333"/><path d="M3.5 13L7.2 3.5H8.8L12.5 13M5.3 9.8H10.7" fill="none" stroke="#fff" stroke-width="1.9"/></svg></i><i class="ka"></i></span></div><div class="kg" style="left:444px;top:138px;"><span class="kb" style="width:28px"><i class="ki"><svg width="16" height="16" viewBox="0 0 16 16" ><g fill="#111"><path d="M1 1H6L4.5 2.5L7 5L5 7L2.5 4.5L1 6Z"/><path d="M15 1H10L11.5 2.5L9 5L11 7L13.5 4.5L15 6Z"/><path d="M1 15H6L4.5 13.5L7 11L5 9L2.5 11.5L1 10Z"/><path d="M15 15H10L11.5 13.5L9 11L11 9L13.5 11.5L15 10Z"/></g></svg></i></span><span class="kb" style="width:28px"><i class="ki"><svg width="16" height="16" viewBox="0 0 16 16" ><path d="M1.5 1.5H9M1.5 1.5V10" stroke="#111" stroke-width="1" stroke-dasharray="1 1"/><rect x="11" y="1" width="3.5" height="14" rx="1.5" fill="#fff" stroke="#111" stroke-width="1.1"/><rect x="1" y="11" width="8.5" height="3.5" rx="1.5" fill="#fff" stroke="#111" stroke-width="1.1"/></svg></i></span></div><div class="kg" style="left:508px;top:138px;"><span class="kb" style="width:28px"><i class="ki"><svg width="16" height="16" viewBox="0 0 16 16" ><path d="M4.5 5.5Q4.5 1.8 8 1.8Q11.5 1.8 11.5 5Q11.5 7 9.5 8Q8.2 8.7 8.2 10.3" fill="none" stroke="#222" stroke-width="2.3"/><rect x="6.8" y="12.2" width="2.8" height="2.8" fill="#222"/></svg></i></span></div><!--/TB--></div>
 <div id="kbot" class="abs" style="left:0;top:374px;width:732px;height:27px;border-top:1px solid #bfbfbf;background:linear-gradient(to bottom,#ebebeb,#cfd1cf);box-shadow:0 1px 0 #fff inset"><i class="abs" style="right:4px;top:12px;width:0;height:0;border-style:solid;border-width:0 0 10px 10px;border-color:transparent transparent #666 transparent"></i></div>
</div>

</body></html>
